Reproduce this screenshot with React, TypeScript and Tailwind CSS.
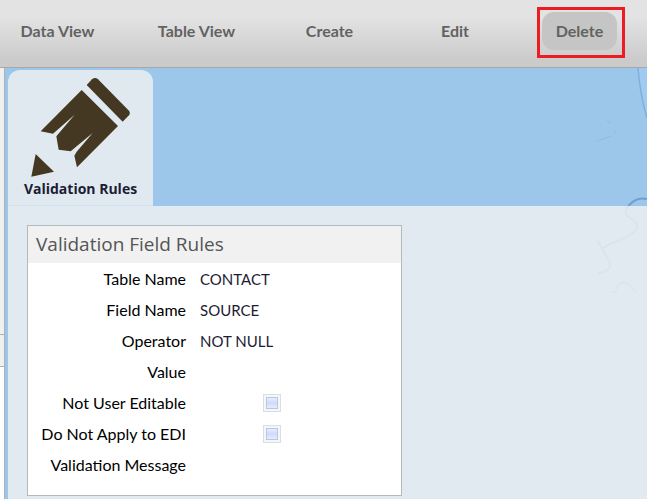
import React from "react";

const navItems = ["Data View", "Table View", "Create", "Edit", "Delete"];

const fields = [
    { label: "Table Name", value: "CONTACT" },
    { label: "Field Name", value: "SOURCE" },
    { label: "Operator", value: "NOT NULL" },
    { label: "Value", value: "" },
    { label: "Not User Editable", checked: false },
    { label: "Do Not Apply to EDI", checked: false },
    { label: "Validation Message", value: "" },
];

interface FieldRowProps {
    label: string;
    value?: string;
    checked?: boolean;
}

const PencilIcon = () => (
    <svg viewBox="93 45 300 300" className="w-[100px] h-[100px]" fill="#453822" aria-hidden="true">
        <path d="M260 69 L276 52 Q285 44 294 52 L387 146 Q392 153 387 160 L368 179 Z" />
        <path d="M245 84 L354 192 L231 316 L223 281 L230 269 L278 213 L212 268 L176 263 L169 223 L224 158 L159 215 L122 208 Z" />
        <path d="M107 276 L162 329 L94 344 Z" />
    </svg>
);

// faint coastline behind the panels
const MapLines = () => (
    <svg
        className="absolute right-0 top-0 w-[67px] h-[262px]"
        viewBox="580 68 67 262"
        fill="none"
        stroke="#7fb0dd"
        aria-hidden="true"
    >
        <path d="M638 68 Q640 94 647 118 L647 68 Z" fill="#a0cbf0" stroke="none" />
        <path d="M638 68 Q640 94 647 118" strokeWidth="1.5" />
        <path d="M606 119 L611 124 M615 131 V134 M597 141 L611 136" strokeWidth="0.5" />
        <path d="M647 199 Q635 196 627 208 C622 218 634 217 637 225 C639 237 610 241 602 249 L598 241 M602 249 C606 258 620 270 598 273" stroke="#6b9fd0" strokeWidth="2" />
        <path d="M610 292 H615 C620 278 627 280 636 292" stroke="#6b9fd0" strokeWidth="1.5" />
    </svg>
);

const FieldRow: React.FC<FieldRowProps> = ({ label, value, checked }) => {
    const id = label.toLowerCase().replace(/ /g, "-");
    return (
        <div className="flex items-center gap-[14px] h-[31px]">
            <label htmlFor={id} className="w-[158px] shrink-0 text-right text-black">
                {label}
            </label>
            {checked === undefined ? (
                <output id={id} className="text-[15px] leading-6 text-[#1c1c34]">{value}</output>
            ) : (
                <input
                    id={id}
                    type="checkbox"
                    defaultChecked={checked}
                    className="appearance-none ml-[63px] w-[18px] h-[18px] p-[2px] border border-[#dcdde0] bg-[#f5f6f8] before:block before:w-3 before:h-3 before:border before:border-[#b9c6ec] before:bg-linear-to-b before:from-[#e6ecfc] before:via-[#cfdcf8] before:to-[#e6ecfc] checked:before:bg-[#4a6fd0]"
                />
            )}
        </div>
    );
};

const App = () => {
    return (
        <div className="min-h-screen flex flex-col bg-white font-[Lato,'Liberation_Sans',sans-serif]">
            {/* top menu */}
            <nav className="h-[68px] shrink-0 pr-[17px] pt-3 grid grid-cols-[115fr_163fr_103fr_148fr_101fr] items-start justify-items-center border-b border-[#a8a8a8] bg-linear-to-b from-[#e3e3e3] from-25% to-[#cbcbcb] to-90%">
                {navItems.map((item) => (
                    <div key={item} className="relative">
                        <button
                            className={`h-[38px] px-[14px] rounded-xl text-base font-bold text-[#626262] whitespace-nowrap ${item === "Delete" ? "bg-[#c5c5c5]" : ""}`}
                        >
                            {item}
                        </button>
                        {item === "Delete" && (
                            <span className="absolute -left-[5px] -right-2 -top-[5px] -bottom-2 border-3 border-[#ed1c24] pointer-events-none" />
                        )}
                    </div>
                ))}
            </nav>

            <div className="flex flex-1">
                {/* collapsed side panel */}
                <aside className="w-[5px] shrink-0 border-r border-[#b0b0b0]">
                    <div className="h-[267px] bg-[#f0f0f0] border-b border-[#b0b0b0]" />
                    <div className="h-8 bg-[#f0f0f0] border-b border-[#b0b0b0]" />
                </aside>

                <main className="relative flex flex-1 flex-col pl-[3px] pt-[2px] bg-[#9cc6ea]">
                    <MapLines />
                    <a
                        href="#validation-rules"
                        className="relative w-[145px] h-[136px] pt-[7px] flex flex-col items-center rounded-t-xl border-b border-[#cfe0ee] bg-[#e1e9f0]"
                    >
                        <PencilIcon />
                        <span className="font-['Open_Sans','Noto_Sans',sans-serif] text-sm leading-6 font-bold text-[#1c1c34]">
                            Validation Rules
                        </span>
                    </a>

                    <div id="validation-rules" className="relative flex-1 pl-[19px] pt-[19px] pb-[3px] bg-[#eaeef1]/88">
                        <section className="w-[375px] pb-[15px] border border-[#b4b9be] bg-white">
                            <h2 className="h-[37px] pl-2 flex items-center bg-[#f1f1f1] font-['Open_Sans','Noto_Sans',sans-serif] text-[19px] text-[#555]">
                                Validation Field Rules
                            </h2>
                            {fields.map((field) => (
                                <FieldRow key={field.label} {...field} />
                            ))}
                        </section>
                    </div>
                </main>
            </div>
        </div>
    );
};

export default App;
